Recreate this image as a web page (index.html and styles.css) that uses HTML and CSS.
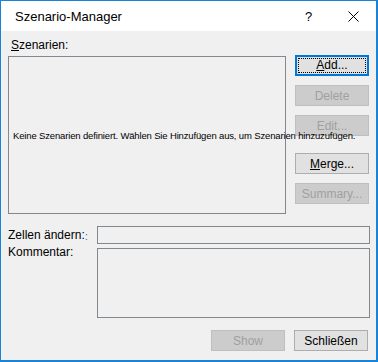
FILE: index.html
```html
<!DOCTYPE html>
<html lang="de">
<head>
	<meta charset="UTF-8">
	<title>Szenario-Manager</title>
	<link rel="stylesheet" href="styles.css">
</head>
<body>
	<div class="window">
		<div class="titlebar">
			<span class="title">Szenario-Manager</span>
			<span class="tb-help">?</span>
			<span class="tb-close">
				<svg width="11" height="11" viewBox="0 0 11 11"><path d="M0.5 0.5 L10.5 10.5 M10.5 0.5 L0.5 10.5" stroke="#000" stroke-width="1" fill="none"/></svg>
			</span>
		</div>
		<div class="content">
			<div class="top">
				<div class="scen">
					<div class="scen-label"><u>S</u>zenarien:</div>
					<div class="list">
						<span class="list-msg">Keine Szenarien definiert. Wählen Sie Hinzufügen aus, um Szenarien hinzuzufügen.</span>
					</div>
				</div>
				<div class="side-buttons">
					<button class="btn btn-default"><span class="focus"><u>A</u>dd...</span></button>
					<button class="btn" disabled>Delete</button>
					<button class="btn" disabled>Edit...</button>
					<button class="btn btn-gap"><u>M</u>erge...</button>
					<button class="btn" disabled>Summary...</button>
				</div>
			</div>
			<div class="field-row">
				<label class="field-label">Zellen ändern:<span class="mark">:</span></label>
				<div class="field-input"></div>
			</div>
			<div class="field-row field-row-top">
				<label class="field-label">Kommentar:</label>
				<div class="field-area"></div>
			</div>
			<div class="bottom">
				<button class="btn" disabled>Show</button>
				<button class="btn">Schließen</button>
			</div>
		</div>
	</div>
</body>
</html>
```
FILE: styles.css
```css
body{
	margin: 0;
}
.window{
	width: 378px;
	height: 362px;
	box-sizing: border-box;
	border: 1px solid #1883d7;
	border-width: 1px 2px 2px 1px;
	background: #f0f0f0;
	font-family: "Liberation Sans", Arial, sans-serif;
	font-size: 12px;
	color: #000;
}
.titlebar{
	height: 30px;
	background: #fff;
	display: flex;
	align-items: center;
	padding-left: 14px;
}
.title{
	font-size: 13px;
	flex: 1;
}
.tb-help{
	font-size: 13px;
	width: 43px;
}
.tb-close{
	width: 28px;
	height: 11px;
	display: flex;
}
.content{
	padding: 7px 7px 0 7px;
}
.top{
	display: flex;
	gap: 9px;
}
.scen{
	width: 278px;
}
.scen-label{
	height: 18px;
	line-height: 15px;
	padding-left: 3px;
}
.list{
	height: 158px;
	box-sizing: border-box;
	border: 1px solid #828790;
	display: flex;
	align-items: center;
	white-space: nowrap;
	padding-left: 4px;
	padding-top: 1px;
}
.list-msg{
	font-size: 9.5px;
	letter-spacing: -0.15px;
	position: relative;
	z-index: 1;
}
.side-buttons{
	margin-top: 17px;
	display: flex;
	flex-direction: column;
	gap: 9px;
}
.btn{
	width: 74px;
	height: 21px;
	box-sizing: border-box;
	border: 1px solid #adadad;
	background: #e1e1e1;
	font-family: "Liberation Sans", Arial, sans-serif;
	font-size: 12px;
	color: #000;
	padding: 0;
	margin: 0;
}
.btn:disabled{
	background: #cccccc;
	border-color: #bfbfbf;
	color: #a0a0a0;
}
.btn-default{
	border: 2px solid #0078d7;
	padding: 1px;
}
.focus{
	display: block;
	height: 100%;
	box-sizing: border-box;
	border: 1px dotted #000;
	line-height: 13px;
}
.btn-gap{
	margin-top: 8px;
}
.field-row{
	display: flex;
	align-items: center;
	margin-top: 12px;
}
.field-row-top{
	align-items: flex-start;
	margin-top: 4px;
}
.field-label{
	width: 89px;
	line-height: 15px;
	position: relative;
}
.field-row-top .field-label{
	margin-top: -3px;
}
.mark{
	position: absolute;
	left: 77px;
	top: 1px;
	color: #1e6bb8;
	font-size: 10px;
}
.field-input{
	width: 274px;
	height: 18px;
	box-sizing: border-box;
	border: 1px solid #828790;
	margin-right: -1px;
}
.field-area{
	width: 274px;
	height: 70px;
	box-sizing: border-box;
	border: 1px solid #828790;
	margin-right: -1px;
}
.bottom{
	display: flex;
	justify-content: flex-end;
	gap: 9px;
	margin-top: 12px;
	padding-right: 1px;
}
.bottom .btn{
	width: 74px;
}
```
